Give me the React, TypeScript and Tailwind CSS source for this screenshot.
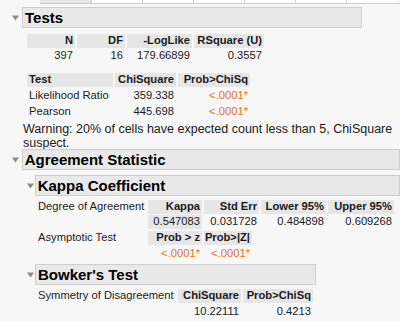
import React from 'react';

const Tri = () => (
  <svg width="7" height="6" viewBox="0 0 7 6" className="shrink-0">
    <path d="M0 0.5 L7 0.5 L3.5 5.5 Z" fill="#8a8a8a" />
  </svg>
);

function Outline({ title, tri, w }: { title: string; tri: string; w: string }) {
  return (
    <div className="flex items-center">
      <div className={`${tri} flex items-center`}>
        <Tri />
      </div>
      <div
        className={`${w} h-[21px] bg-[#e9e9e9] border border-[#cdcdcd] flex items-center pl-[2px] text-[15px] font-bold text-black`}
      >
        {title}
      </div>
    </div>
  );
}

type Cell = { t: string; w: string; left?: boolean; orange?: boolean; gray?: boolean };

function Row({ cells, head, h = 'h-[14px]' }: { cells: Cell[]; head?: boolean; h?: string }) {
  return (
    <div className="flex gap-[2px]">
      {cells.map((c, i) => (
        <div
          key={i}
          className={`${c.w} ${h} flex items-center px-[2px] whitespace-nowrap ${c.left ? 'justify-start' : 'justify-end'} ${
            head || c.gray ? 'bg-[#e6e6e6]' : ''
          } ${head ? 'font-bold' : ''} ${c.orange ? 'text-[#e8731b]' : ''}`}
        >
          {c.t}
        </div>
      ))}
    </div>
  );
}

export default function App() {
  return (
    <div
      className="w-[400px] h-[321px] overflow-hidden bg-[#f7f7f7] text-[11.2px] text-[#1a1a1a] leading-none"
      style={{ fontFamily: '"Liberation Sans", Arial, sans-serif' }}
    >
      {/* cut-off table above */}
      <div className="ml-[40px] flex h-[4px] border-b border-[#cfcfcf]">
        <div className="w-[52px] bg-[#e6e6e6] border-r border-[#cfcfcf]" />
        {[0, 1, 2, 3, 4].map((i) => (
          <div key={i} className="w-[51px] bg-white border-r border-[#cfcfcf]" />
        ))}
        <div className="w-[49px] bg-white" />
      </div>

      {/* Tests */}
      <div className="mt-[3px]">
        <Outline title="Tests" tri="w-[22px] pl-[12px]" w="w-[340px]" />
      </div>

      <div className="ml-[27px] mt-[6px]">
        <Row
          head
          cells={[
            { t: 'N', w: 'w-[48px]' },
            { t: 'DF', w: 'w-[48px]' },
            { t: '-LogLike', w: 'w-[65px]' },
            { t: 'RSquare (U)', w: 'w-[70px]' },
          ]}
        />
        <Row
          h="h-[16px]"
          cells={[
            { t: '397', w: 'w-[48px]' },
            { t: '16', w: 'w-[48px]' },
            { t: '179.66899', w: 'w-[65px]' },
            { t: '0.3557', w: 'w-[70px]' },
          ]}
        />
      </div>

      <div className="ml-[27px] mt-[9px]">
        <Row
          head
          cells={[
            { t: 'Test', w: 'w-[86px]', left: true },
            { t: 'ChiSquare', w: 'w-[61px]' },
            { t: 'Prob>ChiSq', w: 'w-[72px]' },
          ]}
        />
        <Row
          h="h-[17px]"
          cells={[
            { t: 'Likelihood Ratio', w: 'w-[86px]', left: true },
            { t: '359.338', w: 'w-[61px]' },
            { t: '<.0001*', w: 'w-[72px]', orange: true },
          ]}
        />
        <Row
          h="h-[15px]"
          cells={[
            { t: 'Pearson', w: 'w-[86px]', left: true },
            { t: '445.698', w: 'w-[61px]' },
            { t: '<.0001*', w: 'w-[72px]', orange: true },
          ]}
        />
      </div>

      <p className="ml-[23px] mt-[3px] w-[370px] text-[12.5px] leading-[14px]">
        Warning: 20% of cells have expected count less than 5, ChiSquare suspect.
      </p>

      {/* Agreement Statistic */}
      <div className="-mt-[1px]">
        <Outline title="Agreement Statistic" tri="w-[22px] pl-[12px]" w="w-[390px]" />
      </div>

      <div className="mt-[5px]">
        <Outline title="Kappa Coefficient" tri="w-[35px] pl-[27px]" w="w-[380px]" />
      </div>

      <div className="ml-[38px] mt-[4px] flex">
        <div className="w-[110px] h-[14px] flex items-center whitespace-nowrap">Degree of Agreement</div>
        <div>
          <Row
            head
            cells={[
              { t: 'Kappa', w: 'w-[54px]' },
              { t: 'Std Err', w: 'w-[55px]' },
              { t: 'Lower 95%', w: 'w-[65px]' },
              { t: 'Upper 95%', w: 'w-[66px]' },
            ]}
          />
          <div className="h-[1px]" />
          <Row
            cells={[
              { t: '0.547083', w: 'w-[54px]', gray: true },
              { t: '0.031728', w: 'w-[55px]' },
              { t: '0.484898', w: 'w-[65px]' },
              { t: '0.609268', w: 'w-[66px]' },
            ]}
          />
        </div>
      </div>

      <div className="ml-[38px] mt-[2px] flex">
        <div className="w-[110px] h-[14px] flex items-center whitespace-nowrap">Asymptotic Test</div>
        <div>
          <Row
            head
            cells={[
              { t: 'Prob > z', w: 'w-[54px]' },
              { t: 'Prob>|Z|', w: 'w-[48px]' },
            ]}
          />
          <div className="h-[1px]" />
          <Row
            h="h-[16px]"
            cells={[
              { t: '<.0001*', w: 'w-[54px]', orange: true },
              { t: '<.0001*', w: 'w-[48px]', orange: true },
            ]}
          />
        </div>
      </div>

      {/* Bowker's Test */}
      <div className="mt-[2px]">
        <Outline title="Bowker's Test" tri="w-[35px] pl-[27px]" w="w-[281px]" />
      </div>

      <div className="ml-[38px] mt-[4px] flex">
        <div className="w-[140px] h-[14px] flex items-center whitespace-nowrap">Symmetry of Disagreement</div>
        <div>
          <Row
            head
            cells={[
              { t: 'ChiSquare', w: 'w-[63px]' },
              { t: 'Prob>ChiSq', w: 'w-[70px]' },
            ]}
          />
          <div className="h-[1px]" />
          <Row
            h="h-[15px]"
            cells={[
              { t: '10.22111', w: 'w-[63px]' },
              { t: '0.4213', w: 'w-[70px]' },
            ]}
          />
        </div>
      </div>
    </div>
  );
}
